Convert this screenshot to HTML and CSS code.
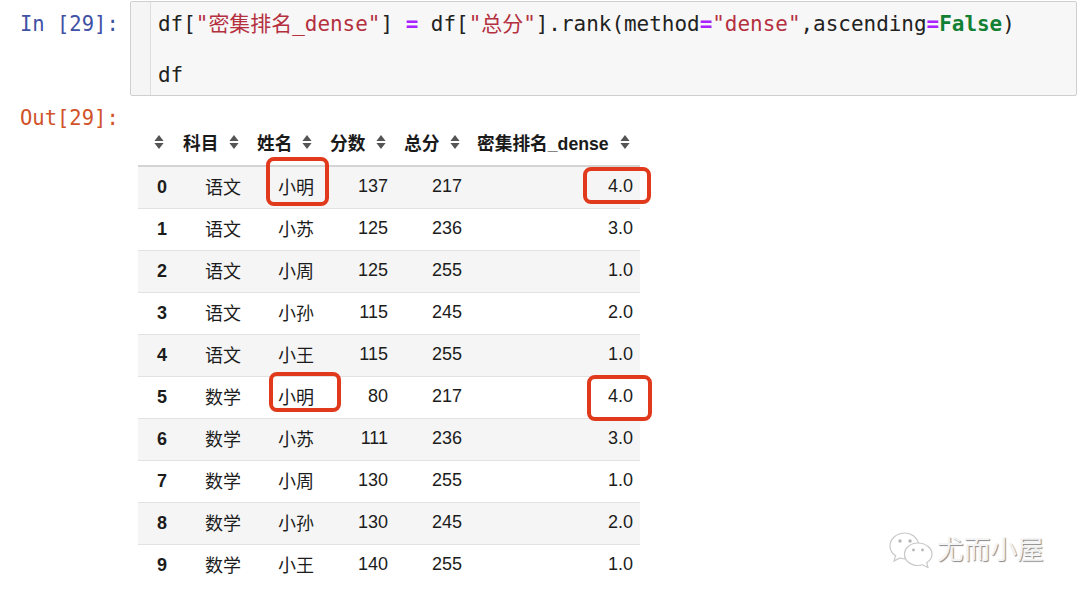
FILE: index.html
```html
<!DOCTYPE html>
<html lang="zh">
<head>
<meta charset="utf-8">
<title>df rank dense</title>
<link rel="stylesheet" href="styles.css">
</head>
<body>
<svg class="defs" width="0" height="0" aria-hidden="true">
  <symbol id="sort" viewBox="0 0 10 16"><path d="M5 1 9.6 7H.4zM.4 9h9.2L5 15z"/></symbol>
</svg>
<main class="page">
  <section class="cell-in">
    <div class="prompt prompt-in">In [29]:</div>
    <div class="code-box">
      <div class="gutter"></div>
      <pre class="code">df[<span class="str">"密集排名_dense"</span>] <span class="op">=</span> df[<span class="str">"总分"</span>].rank(method<span class="op">=</span><span class="str">"dense"</span>,ascending<span class="op">=</span><span class="kw">False</span>)

df</pre>
    </div>
  </section>
  <section class="cell-out">
    <div class="prompt prompt-out">Out[29]:</div>
    <table class="frame">
      <colgroup><col class="c0"><col class="c1"><col class="c2"><col class="c3"><col class="c4"><col class="c5"></colgroup>
      <thead>
        <tr>
          <th class="h0"><svg class="si"><use href="#sort"/></svg></th>
          <th><div class="hc"><span>科目</span><svg class="si"><use href="#sort"/></svg></div></th>
          <th><div class="hc"><span>姓名</span><svg class="si"><use href="#sort"/></svg></div></th>
          <th><div class="hc"><span>分数</span><svg class="si"><use href="#sort"/></svg></div></th>
          <th><div class="hc"><span>总分</span><svg class="si"><use href="#sort"/></svg></div></th>
          <th class="h5"><div class="hc"><span>密集排名_dense</span><svg class="si"><use href="#sort"/></svg></div></th>
        </tr>
      </thead>
      <tbody>
        <tr><th>0</th><td>语文</td><td>小明</td><td>137</td><td>217</td><td>4.0</td></tr>
        <tr><th>1</th><td>语文</td><td>小苏</td><td>125</td><td>236</td><td>3.0</td></tr>
        <tr><th>2</th><td>语文</td><td>小周</td><td>125</td><td>255</td><td>1.0</td></tr>
        <tr><th>3</th><td>语文</td><td>小孙</td><td>115</td><td>245</td><td>2.0</td></tr>
        <tr><th>4</th><td>语文</td><td>小王</td><td>115</td><td>255</td><td>1.0</td></tr>
        <tr><th>5</th><td>数学</td><td>小明</td><td>80</td><td>217</td><td>4.0</td></tr>
        <tr><th>6</th><td>数学</td><td>小苏</td><td>111</td><td>236</td><td>3.0</td></tr>
        <tr><th>7</th><td>数学</td><td>小周</td><td>130</td><td>255</td><td>1.0</td></tr>
        <tr><th>8</th><td>数学</td><td>小孙</td><td>130</td><td>245</td><td>2.0</td></tr>
        <tr><th>9</th><td>数学</td><td>小王</td><td>140</td><td>255</td><td>1.0</td></tr>
      </tbody>
    </table>
  </section>
  <div class="mark m1"></div>
  <div class="mark m2"></div>
  <div class="mark m3"></div>
  <div class="mark m4"></div>
  <div class="wm">
    <svg class="wm-icon" viewBox="0 0 44 36">
      <path class="b" d="M16 1C7.5 1 1 6.8 1 14c0 4 2.200 7.500 5.500 9.800L5 29l6-3c1.500.5 3 .7 4.500.8L30 12C28 5.500 22.500 1 16 1z"/>
      <circle class="e" cx="11" cy="9" r="1.700"/><circle class="e" cx="21" cy="9" r="1.700"/>
      <path class="b" d="M29 11c-7.500 0-13.500 5-13.500 11.300S21.500 33.500 29 33.500c1.600 0 3-.2 4.400-.7L39 35.500l-1.300-4.800c3.200-2 5.300-5 5.300-8.400C43 16 36.500 11 29 11z"/>
      <circle class="e" cx="24.500" cy="18" r="1.400"/><circle class="e" cx="33.500" cy="18" r="1.400"/>
    </svg>
    <span class="wm-text">尤而小屋</span>
  </div>
</main>
</body>
</html>
```
FILE: styles.css
```css
* { box-sizing: border-box; }
html, body { margin: 0; padding: 0; background: #fff; }
.defs { position: absolute; }
.page {
  position: relative;
  width: 1080px;
  height: 599px;
  overflow: hidden;
  padding-top: 1px;
  color: #1c1c1c;
  font-family: "Liberation Sans", "Noto Sans CJK SC", sans-serif;
}
.cell-in, .cell-out { display: flex; }
.prompt {
  width: 130px;
  padding-left: 20px;
  flex: none;
  font: 20.5px/26px "DejaVu Sans Mono", "Noto Sans CJK SC", monospace;
}
.prompt-in { color: #3f51a5; padding-top: 10px; }
.prompt-out { color: #d0532a; padding-top: 0; margin-top: -1px; }
.code-box {
  display: flex;
  width: 947px;
  height: 95px;
  background: #f7f7f7;
  border: 1px solid #cfcfcf;
  border-radius: 2px;
}
.gutter { width: 20px; flex: none; border-right: 1px solid #dedede; background: #f5f5f5; }
.code {
  margin: 0;
  padding: 10px 0 0 7px;
  font: 20.95px/25.5px "DejaVu Sans Mono", "Noto Sans CJK SC", monospace;
  color: #222;
}
.str { color: #b5303f; }
.op { color: #aa22ff; font-weight: bold; }
.kw { color: #118033; font-weight: bold; }
.cell-out { margin-top: 10px; }
.frame {
  width: 502px;
  margin: 15px 0 0 8px;
  border-collapse: collapse;
  table-layout: fixed;
  font-size: 18px;
  color: #1c1c1c;
}
.c0 { width: 36px; }
.c1 { width: 74px; }
.c2 { width: 73px; }
.c3 { width: 74px; }
.c4 { width: 74px; }
.c5 { width: 171px; }
thead tr { height: 45px; }
thead th { padding: 0 9px 2px; border-bottom: 2px solid #d4d4d4; font-size: 17.7px; color: #1a1a1a; }
thead th.h0 { padding: 0 10px 2px 0; text-align: center; }
thead th.h5 { padding-left: 8px; padding-right: 10px; }
.hc { display: flex; justify-content: space-between; align-items: center; }
.si { width: 10px; height: 16px; fill: #555; display: block; flex: none; }
th.h0 .si { margin-left: 16px; }
tbody tr { height: 42px; border-bottom: 1px solid #e2e2e2; }
tbody tr:last-child { border-bottom: 0; }
tbody tr:nth-child(odd) { background: #f5f5f5; }
tbody th { text-align: center; padding: 1px 0 0 12px; font-weight: bold; font-size: 18px; }
tbody td { text-align: right; padding: 0 7px 2px; }
.mark {
  position: absolute;
  border: 4px solid #e0391c;
  border-radius: 8px;
}
.m1 { left: 266px; top: 157px; width: 63px; height: 49px; }
.m2 { left: 583px; top: 167px; width: 68px; height: 37px; }
.m3 { left: 269px; top: 372px; width: 72px; height: 40px; }
.m4 { left: 587px; top: 375px; width: 65px; height: 46px; }
.wm {
  position: absolute;
  left: 889px;
  top: 532px;
  display: flex;
  align-items: center;
  gap: 4px;
}
.wm-icon { width: 44px; height: 36px; display: block; }
.b { fill: #fff; stroke: #c8c8c8; stroke-width: 1.200; }
.e { fill: #b5b5b5; }
.wm-text {
  font-size: 26.700px;
  line-height: 36px;
  color: #f4f4f4;
  text-shadow: 1px 1px 1px #8a8a8a;
}
```
